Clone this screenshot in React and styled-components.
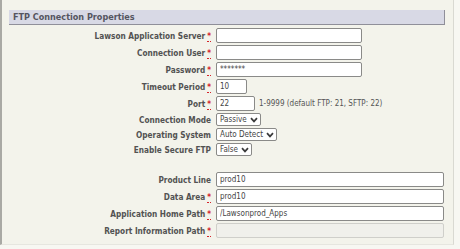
import React from "react";
import styled, { createGlobalStyle } from "styled-components";

const GlobalStyle = createGlobalStyle`
  html, body {
    margin: 0;
    padding: 0;
    background: #f7f7f2;
  }
  * {
    box-sizing: border-box;
  }
`;

const FONT = `"DejaVu Sans Condensed", "DejaVu Sans", Tahoma, sans-serif`;

const TOP_FIELDS = [
  { label: "Lawson Application Server", required: true, type: "input", width: 146, value: "" },
  { label: "Connection User", required: true, type: "input", width: 146, value: "" },
  { label: "Password", required: true, type: "input", width: 146, value: "*******" },
  { label: "Timeout Period", required: true, type: "input", width: 31, value: "10" },
  {
    label: "Port",
    required: true,
    type: "input",
    width: 39,
    value: "22",
    hint: "1-9999 (default FTP: 21, SFTP: 22)",
  },
  { label: "Connection Mode", type: "select", value: "Passive" },
  { label: "Operating System", type: "select", value: "Auto Detect" },
  { label: "Enable Secure FTP", type: "select", value: "False" },
];

const BOTTOM_FIELDS = [
  { label: "Product Line", type: "input", width: 228, value: "prod10" },
  { label: "Data Area", required: true, type: "input", width: 228, value: "prod10" },
  { label: "Application Home Path", required: true, type: "input", width: 228, value: "/Lawsonprod_Apps" },
  { label: "Report Information Path", required: true, type: "input", width: 228, value: "", disabled: true },
];

function Chevron() {
  return (
    <svg width="8" height="6" viewBox="0 0 8 6" aria-hidden="true">
      <path d="M1 1.2 L4 4.4 L7 1.2" fill="none" stroke="#3b3b3b" strokeWidth="1.7" />
    </svg>
  );
}

function Field({ field }) {
  return (
    <>
      <Label>
        {field.label}
        {field.required && <Req title="required">*</Req>}
      </Label>
      <Cell>
        {field.type === "select" ? (
          <SelectBox>
            {field.value}
            <Chevron />
          </SelectBox>
        ) : (
          <TextInput
            $width={field.width}
            value={field.value}
            disabled={field.disabled}
            readOnly
          />
        )}
        {field.hint && <Hint>{field.hint}</Hint>}
      </Cell>
    </>
  );
}

export default function App() {
  return (
    <>
      <GlobalStyle />
      <Page>
        <Header>FTP Connection Properties</Header>
        <Form>
          {TOP_FIELDS.map((f) => (
            <Field key={f.label} field={f} />
          ))}
          <Spacer />
          {BOTTOM_FIELDS.map((f) => (
            <Field key={f.label} field={f} />
          ))}
        </Form>
      </Page>
    </>
  );
}

const Page = styled.div`
  width: 454px;
  height: 245px;
  background: #f3f3eb;
  border-left: 2px solid #a9a9a4;
  border-right: 1px solid #d9d9d2;
  border-bottom: 1px solid #e6e6df;
  padding: 10px 8px 0 7px;
  font-family: ${FONT};
`;

const Header = styled.div`
  height: 15px;
  background: #d8d9e5;
  border-right: 1px solid #8f8f99;
  border-bottom: 1px solid #8f8f99;
  color: #555560;
  font-weight: bold;
  font-size: 9px;
  line-height: 14px;
  padding-left: 4px;
`;

const Form = styled.div`
  display: grid;
  grid-template-columns: 202px 1fr;
  column-gap: 5px;
  row-gap: 2px;
  align-items: center;
  margin-top: 3px;
`;

const Label = styled.div`
  text-align: right;
  font-weight: bold;
  font-size: 8.2px;
  color: #525252;
  white-space: nowrap;
`;

const Req = styled.abbr`
  color: #d4242a;
  margin-left: 2px;
  text-decoration: none;
  border-bottom: 1px dotted #d4242a;
  font-size: 8px;
`;

const Cell = styled.div`
  display: flex;
  align-items: center;
  gap: 4px;
`;

const TextInput = styled.input`
  width: ${(p) => p.$width}px;
  height: 15px;
  margin: 0;
  padding: 0 3px;
  border: 1px solid #8a8a88;
  border-radius: 2px;
  background: #ffffff;
  font-family: ${FONT};
  font-size: 8px;
  color: #444;
  outline: none;

  &:disabled {
    background: #f0f0eb;
    border-color: #cfcfca;
  }
`;

const SelectBox = styled.div`
  display: inline-flex;
  align-items: center;
  gap: 3px;
  height: 13px;
  padding: 0 2px 0 3px;
  border: 1px solid #8a8a88;
  border-radius: 2px;
  background: #ffffff;
  font-size: 8px;
  color: #444;
`;

const Hint = styled.span`
  font-size: 8px;
  color: #555;
`;

const Spacer = styled.div`
  grid-column: 1 / -1;
  height: 12px;
`;
